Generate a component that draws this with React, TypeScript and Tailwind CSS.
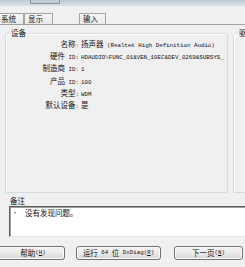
import React from "react";

const M = ({ children }: { children: React.ReactNode }) => (
  <span className="font-['Liberation_Mono',monospace] text-[5.8px]">{children}</span>
);

const rows: { label: React.ReactNode; value: React.ReactNode }[] = [
  { label: <>名称<M>:</M></>, value: <>扬声器<M> (Realtek High Definition Audio)</M></> },
  { label: <>硬件<M> ID:</M></>, value: <M>HDAUDIO\FUNC_01&amp;VEN_10EC&amp;DEV_0269&amp;SUBSYS_</M> },
  { label: <>制造商<M> ID:</M></>, value: <M>1</M> },
  { label: <>产品<M> ID:</M></>, value: <M>100</M> },
  { label: <>类型<M>:</M></>, value: <M>WDM</M> },
  { label: <>默认设备<M>:</M></>, value: <>是</> },
];

const Tab = ({ children, className }: { children: React.ReactNode; className: string }) => (
  <div
    className={`h-[11px] flex items-center border-t border-r border-l border-[#a3a3a3] bg-gradient-to-b from-[#f7f7f7] to-[#e9e9e9] text-[7.5px] leading-[8px] ${className}`}
  >
    {children}
  </div>
);

const Btn = ({ children, className }: { children: React.ReactNode; className: string }) => (
  <div
    className={`h-[14px] flex items-center justify-center border border-[#707070] rounded-[3px] bg-gradient-to-b from-[#f2f2f2] via-[#ebebeb] to-[#d5d5d5] shadow-[inset_0_0_0_1px_#fcfcfc] text-[7.5px] leading-[8px] whitespace-pre ${className}`}
  >
    {children}
  </div>
);

export default function App() {
  return (
    <div className="w-[245px] h-[267px] bg-[#f0f0f0] overflow-hidden flex flex-col font-['Noto_Sans_CJK_SC','Noto_Sans_CJK_JP',sans-serif] text-[#111]">
      {/* top strip */}
      <div className="h-[6px] shrink-0 bg-gradient-to-b from-[#bccbd9] to-[#d9e2ea] flex">
        <div className="ml-[30px] w-[30px] h-[4px] bg-[#c4ccd3] border border-t-0 border-[#8d969e]" />
      </div>
      <div className="h-[7px] shrink-0" />
      {/* tabs */}
      <div className="h-[12px] shrink-0 flex items-end border-b border-[#a0a0a0]">
        <Tab className="w-[25px] -ml-[1px] pl-[1px]">系统</Tab>
        <Tab className="w-[29px] pl-[3px]">显示</Tab>
        <div className="w-[26px]" />
        <Tab className="w-[27px] pl-[3px]">输入</Tab>
      </div>
      <div className="h-[8px] shrink-0" />
      {/* group boxes */}
      <div className="h-[160px] shrink-0 flex pl-[5px] gap-[5px]">
        <div className="relative w-[223px] h-[160px] shrink-0 border border-[#d3dbe0] rounded-[2px] shadow-[inset_1px_1px_0_#ffffff]">
          <span className="absolute left-[4px] -top-[5px] px-[1px] bg-[#f0f0f0] text-[7.5px] leading-[8px]">设备</span>
          <div className="grid grid-cols-[73px_1fr] gap-x-[2px] pt-[5px] text-[7.5px] leading-[10.2px] overflow-hidden">
            {rows.map((r, i) => (
              <React.Fragment key={i}>
                <div className="text-right whitespace-pre">{r.label}</div>
                <div className="whitespace-pre overflow-hidden">{r.value}</div>
              </React.Fragment>
            ))}
          </div>
        </div>
        <div className="relative w-[20px] h-[160px] shrink-0 border border-[#d3dbe0] rounded-[2px] shadow-[inset_1px_1px_0_#ffffff]">
          <span className="absolute left-[4px] -top-[5px] px-[1px] bg-[#f0f0f0] text-[7.5px] leading-[8px] whitespace-nowrap">驱</span>
        </div>
      </div>
      {/* notes */}
      <div className="mt-[4px] h-[8px] shrink-0 pl-[10px] text-[7.5px] leading-[8px]">备注</div>
      <div className="mt-[1px] ml-[9px] w-[240px] h-[31px] shrink-0 bg-white border-t border-l border-[#5e5e5e] border-b border-b-[#e4e4e4] shadow-[inset_1px_1px_0_#a0a0a0] flex items-start pt-[1px] text-[7.5px] leading-[10px]">
        <span className="w-[15px] pl-[2px] text-[6px]">•</span>
        <span>没有发现问题。</span>
      </div>
      {/* buttons */}
      <div className="mt-[9px] h-[14px] shrink-0 flex">
        <Btn className="-ml-[4px] w-[69px] shrink-0 pl-[5px]">
          帮助<M>(<span className="underline">H</span>)</M>
        </Btn>
        <Btn className="ml-[11px] w-[85px] shrink-0">
          运行<M> 64 </M>位<M> DxDiag(<span className="underline">R</span>)</M>
        </Btn>
        <Btn className="ml-[13px] w-[69px] shrink-0">
          下一页<M>(<span className="underline">N</span>)</M>
        </Btn>
      </div>
    </div>
  );
}
